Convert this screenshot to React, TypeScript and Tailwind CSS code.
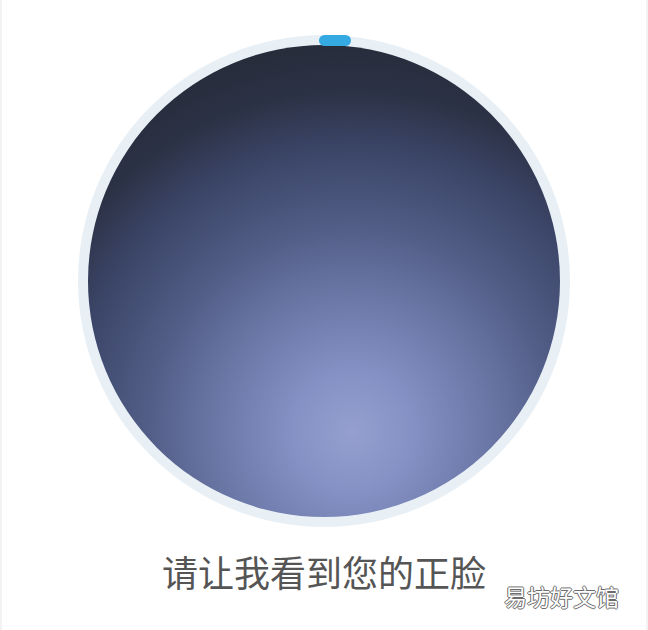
export default function App() {
  return (
    <div className="relative flex h-[630px] w-[648px] flex-col items-center border-x-2 border-[#f1f2f4] bg-white pt-[35px] font-['Noto_Sans_CJK_SC',sans-serif]">
      <div className="relative h-[492px] w-[492px] rounded-full bg-[#e8f0f6] p-[10px]">
        <div className="h-full w-full rounded-full bg-[radial-gradient(circle_420px_at_56%_82%,#95a0d0_0px,#8591c4_60px,#6d79a9_130px,#545f89_200px,#3c4669_280px,#2c3246_340px,#262b38_400px)]" />
        <div className="absolute left-[241px] top-0 h-[11px] w-[32px] rounded-full bg-[#35a9e2]" />
      </div>
      <p className="mt-[26px] text-[36px] leading-none text-[#555555]">请让我看到您的正脸</p>
      <span className="absolute left-[502px] top-[585px] text-[23px] leading-none text-white [text-shadow:1px_0_0_#6b6b6b,-1px_0_0_#6b6b6b,0_1px_0_#6b6b6b,0_-1px_0_#6b6b6b]">
        易坊好文馆
      </span>
    </div>
  );
}
